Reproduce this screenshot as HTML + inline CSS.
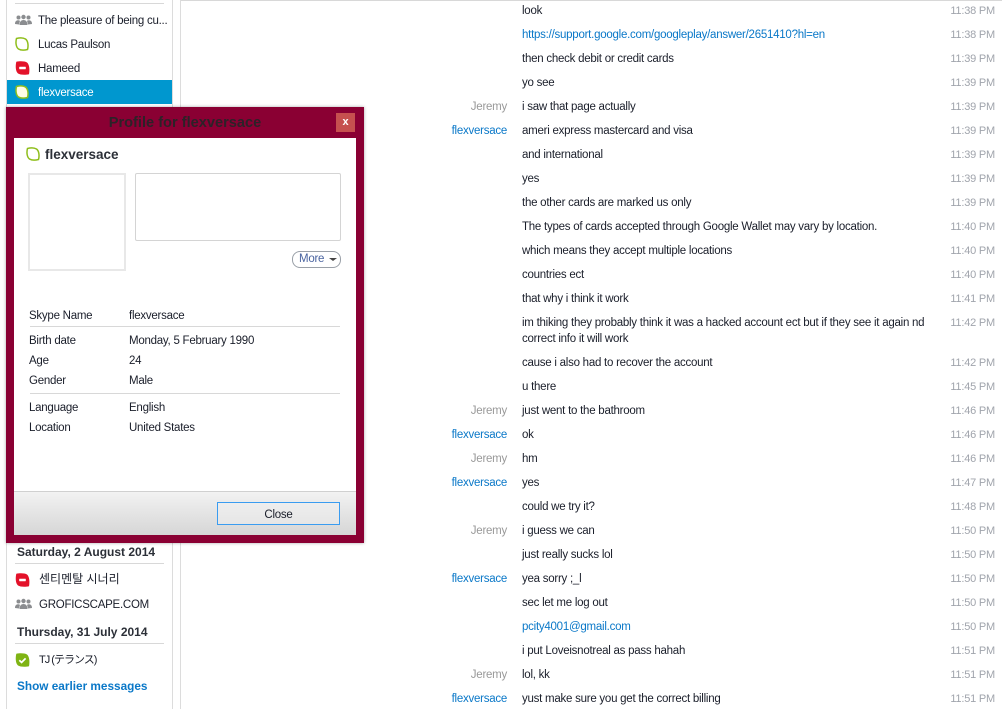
<!DOCTYPE html>
<html><head><meta charset="utf-8">
<style>
html,body{margin:0;padding:0;background:#fff;}
#p{position:relative;width:1002px;height:709px;overflow:hidden;background:#fff;font-family:"Liberation Sans","Noto Sans CJK KR",sans-serif;font-size:11.5px;letter-spacing:-.25px;color:#1a1e2a;}
.t,.b{position:absolute;white-space:nowrap;line-height:18px;height:18px;}
.n{position:absolute;right:495px;white-space:nowrap;line-height:18px;}
.g{color:#999;}.l{color:#0a78c8;}
.m{position:absolute;left:522px;white-space:nowrap;line-height:18px;}
.h{position:absolute;right:7px;color:#a0a4ac;white-space:nowrap;line-height:18px;font-size:11px;letter-spacing:-.2px;}
.r{position:absolute;background:#d8d8d8;height:1px;}
.v{position:absolute;width:1px;background:#dcdcdc;top:0;height:709px;}
.b{font-weight:bold;color:#2c3038;font-size:12px;letter-spacing:0;line-height:16px;height:16px;}
svg{position:absolute;}
</style></head><body><div id="p">
<div class="v" style="left:6px"></div><div class="v" style="left:172px"></div><div class="v" style="left:180px"></div>
<div class="r" style="left:181px;top:0;width:821px;height:1px"></div>
<div class="r" style="left:15px;top:3px;width:149px"></div>

<svg style="left:15px;top:14px" width="17" height="12" viewBox="0 0 17 12"><g fill="#8b8d90"><circle cx="8.500" cy="3" r="2.200"/><circle cx="3.500" cy="3.500" r="2"/><circle cx="13.500" cy="3.500" r="2"/><path d="M4.500 11c0-3 1.500-5 4-5s4 2 4 5z"/><path d="M0 10c0-2.500 1-3.800 3.500-3.800l1.500.5-1 3.800zM17 10c0-2.500-1-3.800-3.500-3.800l-1.500.5 1 3.800z"/></g></svg>
<div class="t" style="left:38px;top:12px">The pleasure of being cu...</div>
<svg style="left:15px;top:37px" width="14" height="14" viewBox="0 0 14 14"><path d="M1.500 1.500C4 .8 8 .5 10.500 2 13.200 4 13.500 9 12.500 12.500 10 13.200 6 13.500 3.500 12 .8 10 .5 5 1.500 1.500z" fill="#fff" stroke="#8fbe1c" stroke-width="1.500"/></svg>
<div class="t" style="left:38px;top:36px">Lucas Paulson</div>
<svg style="left:15px;top:61px" width="15" height="14" viewBox="0 0 14 14"><path d="M.8.8C4 0 9 0 11.500 1.500 14 3.500 14.300 9 13.500 13.200 10 14 5 14 2.500 12.500 0 10.500-.2 5 .8.8z" fill="#e3122a"/><rect x="3.700" y="5.800" width="6.600" height="2.400" rx=".5" fill="#fff"/></svg>
<div class="t" style="left:38px;top:60px">Hameed</div>
<div style="position:absolute;left:7px;top:80px;width:165px;height:24px;background:#0097cf"></div>
<svg style="left:15px;top:85px" width="14" height="14" viewBox="0 0 14 14"><path d="M1.500 1.500C4 .8 8 .5 10.500 2 13.200 4 13.500 9 12.500 12.500 10 13.200 6 13.500 3.500 12 .8 10 .5 5 1.500 1.500z" fill="#fffde8" stroke="#8fbe1c" stroke-width="1.500"/></svg>
<div class="t" style="left:38px;top:84px;color:#fff">flexversace</div>

<div class="b" style="left:17px;top:544px">Saturday, 2 August 2014</div>
<div class="r" style="left:15px;top:563px;width:149px"></div>
<svg style="left:15px;top:573px" width="15" height="14" viewBox="0 0 14 14"><path d="M.8.8C4 0 9 0 11.500 1.500 14 3.500 14.300 9 13.500 13.200 10 14 5 14 2.500 12.500 0 10.500-.2 5 .8.8z" fill="#e3122a"/><rect x="3.700" y="5.800" width="6.600" height="2.400" rx=".5" fill="#fff"/></svg>
<div class="t" style="left:39px;top:570px;font-size:12px;letter-spacing:0">센티멘탈 시너리</div>
<svg style="left:15px;top:598px" width="17" height="12" viewBox="0 0 17 12"><g fill="#8b8d90"><circle cx="8.500" cy="3" r="2.200"/><circle cx="3.500" cy="3.500" r="2"/><circle cx="13.500" cy="3.500" r="2"/><path d="M4.500 11c0-3 1.500-5 4-5s4 2 4 5z"/><path d="M0 10c0-2.500 1-3.800 3.500-3.800l1.500.5-1 3.800zM17 10c0-2.500-1-3.800-3.500-3.800l-1.500.5 1 3.800z"/></g></svg>
<div class="t" style="left:39px;top:596px">GROFICSCAPE.COM</div>
<div class="b" style="left:17px;top:624px">Thursday, 31 July 2014</div>
<div class="r" style="left:15px;top:643px;width:149px"></div>
<svg style="left:15px;top:653px" width="15" height="14" viewBox="0 0 14 14"><path d="M.8.8C4 0 9 0 11.500 1.500 14 3.500 14.300 9 13.500 13.200 10 14 5 14 2.500 12.500 0 10.500-.2 5 .8.8z" fill="#7fb414"/><path d="M3.800 7.200l2.300 2.200 4-4" fill="none" stroke="#fff" stroke-width="1.700"/></svg>
<div class="t" style="left:39px;top:651px;font-size:11px;letter-spacing:-1px">TJ (テランス)</div>
<div class="b" style="left:17px;top:678px;color:#0a78c8;font-size:11.800px">Show earlier messages</div>

<div class="m" style="top:2px">look</div><div class="h" style="top:2px">11:38 PM</div>
<div class="m l" style="top:26px">https://support.google.com/googleplay/answer/2651410?hl=en</div><div class="h" style="top:26px">11:38 PM</div>
<div class="m" style="top:50px">then check debit or credit cards</div><div class="h" style="top:50px">11:39 PM</div>
<div class="m" style="top:74px">yo see</div><div class="h" style="top:74px">11:39 PM</div>
<div class="n g" style="top:98px">Jeremy</div><div class="m" style="top:98px">i saw that page actually</div><div class="h" style="top:98px">11:39 PM</div>
<div class="n l" style="top:122px">flexversace</div><div class="m" style="top:122px">ameri express mastercard and visa</div><div class="h" style="top:122px">11:39 PM</div>
<div class="m" style="top:146px">and international</div><div class="h" style="top:146px">11:39 PM</div>
<div class="m" style="top:170px">yes</div><div class="h" style="top:170px">11:39 PM</div>
<div class="m" style="top:194px">the other cards are marked us only</div><div class="h" style="top:194px">11:39 PM</div>
<div class="m" style="top:218px">The types of cards accepted through Google Wallet may vary by location.</div><div class="h" style="top:218px">11:40 PM</div>
<div class="m" style="top:242px">which means they accept multiple locations</div><div class="h" style="top:242px">11:40 PM</div>
<div class="m" style="top:266px">countries ect</div><div class="h" style="top:266px">11:40 PM</div>
<div class="m" style="top:290px">that why i think it work</div><div class="h" style="top:290px">11:41 PM</div>
<div class="m" style="top:314px">im thiking they probably think it was a hacked account ect but if they see it again nd</div><div class="h" style="top:314px">11:42 PM</div>
<div class="m" style="top:330px">correct info it will work</div>
<div class="m" style="top:354px">cause i also had to recover the account</div><div class="h" style="top:354px">11:42 PM</div>
<div class="m" style="top:378px">u there</div><div class="h" style="top:378px">11:45 PM</div>
<div class="n g" style="top:402px">Jeremy</div><div class="m" style="top:402px">just went to the bathroom</div><div class="h" style="top:402px">11:46 PM</div>
<div class="n l" style="top:426px">flexversace</div><div class="m" style="top:426px">ok</div><div class="h" style="top:426px">11:46 PM</div>
<div class="n g" style="top:450px">Jeremy</div><div class="m" style="top:450px">hm</div><div class="h" style="top:450px">11:46 PM</div>
<div class="n l" style="top:474px">flexversace</div><div class="m" style="top:474px">yes</div><div class="h" style="top:474px">11:47 PM</div>
<div class="m" style="top:498px">could we try it?</div><div class="h" style="top:498px">11:48 PM</div>
<div class="n g" style="top:522px">Jeremy</div><div class="m" style="top:522px">i guess we can</div><div class="h" style="top:522px">11:50 PM</div>
<div class="m" style="top:546px">just really sucks lol</div><div class="h" style="top:546px">11:50 PM</div>
<div class="n l" style="top:570px">flexversace</div><div class="m" style="top:570px">yea sorry ;_l</div><div class="h" style="top:570px">11:50 PM</div>
<div class="m" style="top:594px">sec let me log out</div><div class="h" style="top:594px">11:50 PM</div>
<div class="m l" style="top:618px">pcity4001@gmail.com</div><div class="h" style="top:618px">11:50 PM</div>
<div class="m" style="top:642px">i put Loveisnotreal as pass hahah</div><div class="h" style="top:642px">11:51 PM</div>
<div class="n g" style="top:666px">Jeremy</div><div class="m" style="top:666px">lol, kk</div><div class="h" style="top:666px">11:51 PM</div>
<div class="n l" style="top:690px">flexversace</div><div class="m" style="top:690px">yust make sure you get the correct billing</div><div class="h" style="top:690px">11:51 PM</div>

<div style="position:absolute;left:6px;top:107px;width:358px;height:436px;background:#8a0033;box-shadow:0 0 3px rgba(0,0,0,.35)"></div>
<div style="position:absolute;left:6px;top:115px;width:358px;text-align:center;font-weight:bold;font-size:14.600px;letter-spacing:0;line-height:16px;color:#2c2228">Profile for flexversace</div>
<div style="position:absolute;left:336px;top:113px;width:19px;height:19px;background:#c6504f;color:#fff;font-weight:bold;font-size:11px;letter-spacing:0;line-height:18px;text-align:center">x</div>
<div style="position:absolute;left:14px;top:138px;width:342px;height:397px;background:#fff"></div>
<svg style="left:26px;top:147px" width="14" height="14" viewBox="0 0 14 14"><path d="M1.500 1.500C4 .8 8 .5 10.500 2 13.200 4 13.500 9 12.500 12.500 10 13.200 6 13.500 3.500 12 .8 10 .5 5 1.500 1.500z" fill="#fff" stroke="#8fbe1c" stroke-width="1.500"/></svg>
<div class="t" style="left:45px;top:146px;font-size:13.500px;letter-spacing:0;font-weight:bold;color:#2c3038">flexversace</div>
<div style="position:absolute;left:28px;top:173px;width:94px;height:94px;border:2px solid #e8e8e8"></div>
<div style="position:absolute;left:135px;top:173px;width:204px;height:66px;border:1px solid #d4d4d4;border-radius:2px"></div>
<div style="position:absolute;left:292px;top:251px;width:47px;height:15px;border:1px solid #9aa0a8;border-radius:8px"></div>
<div class="t" style="left:299px;top:250px;color:#4a64a0">More</div>
<div style="position:absolute;left:329px;top:258px;border-left:4px solid transparent;border-right:4px solid transparent;border-top:3px solid #444"></div>

<div class="t" style="left:29px;top:307px">Skype Name</div><div class="t" style="left:129px;top:307px">flexversace</div>
<div class="r" style="left:30px;top:326px;width:310px"></div>
<div class="t" style="left:29px;top:332px">Birth date</div><div class="t" style="left:129px;top:332px">Monday, 5 February 1990</div>
<div class="t" style="left:29px;top:352px">Age</div><div class="t" style="left:129px;top:352px">24</div>
<div class="t" style="left:29px;top:372px">Gender</div><div class="t" style="left:129px;top:372px">Male</div>
<div class="r" style="left:30px;top:393px;width:310px"></div>
<div class="t" style="left:29px;top:399px">Language</div><div class="t" style="left:129px;top:399px">English</div>
<div class="t" style="left:29px;top:419px">Location</div><div class="t" style="left:129px;top:419px">United States</div>

<div style="position:absolute;left:14px;top:491px;width:342px;height:44px;box-sizing:border-box;border-top:1px solid #d0d0d0;background:linear-gradient(#f2f2f2,#d6d6d6)"></div>
<div style="position:absolute;left:217px;top:502px;width:121px;height:21px;border:1px solid #3a9cf0;background:linear-gradient(#eee,#e6e6e6);text-align:center;line-height:24px">Close</div>
</div></body></html>
